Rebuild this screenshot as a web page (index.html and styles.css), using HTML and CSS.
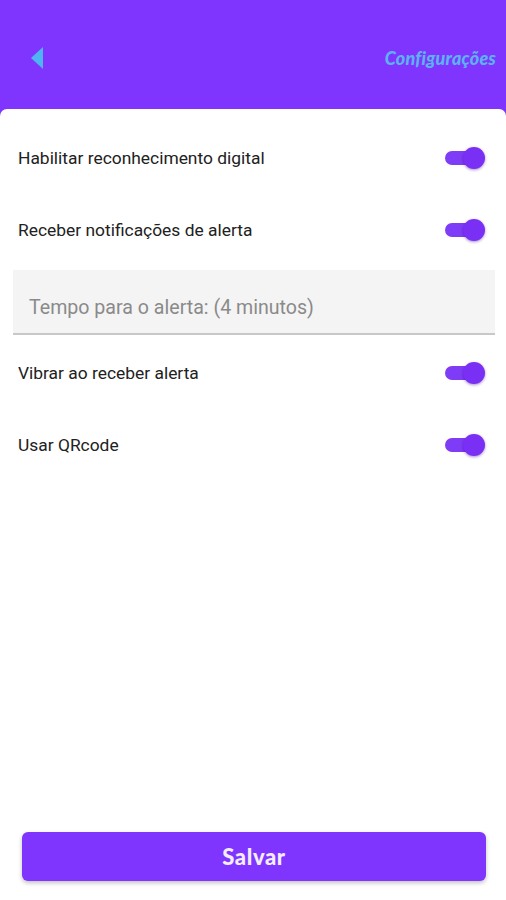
FILE: index.html
```html
<!DOCTYPE html>
<html lang="pt">
<head>
  <meta charset="UTF-8">
  <meta name="viewport" content="width=device-width, initial-scale=1.0">
  <title>Configurações</title>
  <link rel="stylesheet" href="styles.css">
</head>
<body>

  <div class="header">
    <button class="back-btn" aria-label="Voltar">
      <svg width="12" height="22" viewBox="0 0 12 22"><path d="M12 0 L0 11 L12 22 Z" fill="#4fb4f2"/></svg>
    </button>
    <h1 class="title">Configurações</h1>
  </div>

  <div class="card">
    <div class="row">
      <span class="label">Habilitar reconhecimento digital</span>
      <span class="switch"><span class="track"></span><span class="thumb"></span></span>
    </div>
    <div class="row">
      <span class="label">Receber notificações de alerta</span>
      <span class="switch"><span class="track"></span><span class="thumb"></span></span>
    </div>

    <div class="field">
      <input type="text" class="input-field" placeholder="Tempo para o alerta: (4 minutos)">
    </div>

    <div class="row">
      <span class="label">Vibrar ao receber alerta</span>
      <span class="switch"><span class="track"></span><span class="thumb"></span></span>
    </div>
    <div class="row">
      <span class="label">Usar QRcode</span>
      <span class="switch"><span class="track"></span><span class="thumb"></span></span>
    </div>
  </div>

  <div class="footer">
    <button class="btn">Salvar</button>
  </div>

</body>
</html>
```

FILE: styles.css
```css
body {
  font-family: 'Roboto', 'Liberation Sans', sans-serif;
  background-color: #ffffff;
  margin: 0;
  height: 100vh;
  display: flex;
  flex-direction: column;
  color: #222;
}
.header {
  background-color: #8035ff;
  height: 118px;
  display: flex;
  align-items: flex-start;
  justify-content: space-between;
  padding: 47px 10px 0 31px;
  box-sizing: border-box;
  flex-shrink: 0;
}
.back-btn {
  background: none;
  border: none;
  padding: 0;
  height: 22px;
  cursor: pointer;
}
.back-btn svg {
  display: block;
}
.title {
  margin: 0;
  font-family: 'Lato', 'Open Sans', sans-serif;
  font-style: italic;
  font-weight: 900;
  font-size: 18px;
  color: #5cb2f2;
  letter-spacing: 0.2px;
}
.card {
  flex: 1;
  background-color: #fff;
  margin-top: -9px;
  border-radius: 7px 7px 0 0;
  padding-top: 13px;
}
.row {
  height: 72px;
  display: flex;
  align-items: center;
  justify-content: space-between;
  padding: 0 21px 0 18px;
}
.label {
  font-size: 17.4px;
  color: #212121;
}
.switch {
  position: relative;
  width: 40px;
  height: 22px;
}
.track {
  position: absolute;
  left: 0;
  right: 2px;
  top: 4px;
  height: 14px;
  border-radius: 7px;
  background-color: #7f3cf6;
}
.thumb {
  position: absolute;
  right: 0;
  top: 0;
  width: 22px;
  height: 22px;
  border-radius: 50%;
  background-color: #7a2ff5;
  box-shadow: 0 1px 3px rgba(60, 0, 140, 0.45);
}
.field {
  margin: 4px 11px 2px 13px;
}
.input-field {
  width: 100%;
  height: 65px;
  box-sizing: border-box;
  border: none;
  border-bottom: 2px solid #c8c8c8;
  background-color: #f4f4f4;
  padding: 12px 16px 0;
  font-family: 'Roboto', 'Liberation Sans', sans-serif;
  font-size: 19.6px;
  outline: none;
}
.input-field::placeholder {
  color: #8a8a8a;
}
.footer {
  padding: 0 20px 19px 22px;
}
.btn {
  width: 100%;
  height: 49px;
  background-color: #8035ff;
  color: #f4ecff;
  border: none;
  border-radius: 6px;
  font-family: 'Lato', 'Open Sans', sans-serif;
  font-weight: 900;
  font-size: 22px;
  letter-spacing: 0.6px;
  cursor: pointer;
  box-shadow: 0 2px 4px rgba(0, 0, 0, 0.25);
}
```
